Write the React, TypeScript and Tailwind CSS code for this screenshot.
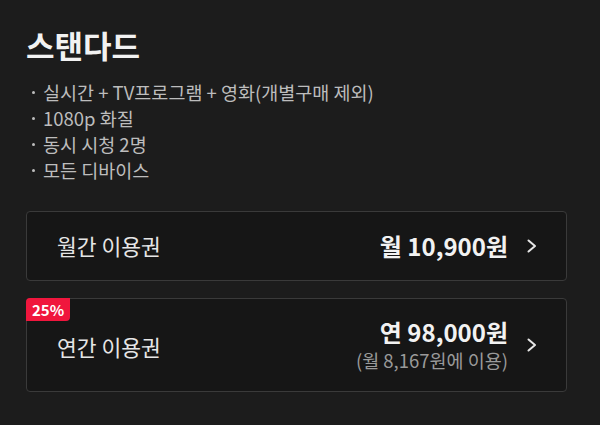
const features = [
  '실시간 + TV프로그램 + 영화(개별구매 제외)',
  '1080p 화질',
  '동시 시청 2명',
  '모든 디바이스',
];

function Chevron() {
  return (
    <svg width="10" height="14" viewBox="0 0 10 14" fill="none" className="text-[#e6e6e6]">
      <path d="M1.5 1.5 8 7l-6.5 5.5" stroke="currentColor" strokeWidth="2" strokeLinecap="round" strokeLinejoin="round" />
    </svg>
  );
}

export default function App() {
  return (
    <div
      className="w-[600px] h-[425px] bg-[#1c1c1c] text-white px-[26px] pt-[25px]"
      style={{ fontFamily: '"Noto Sans CJK KR", "Noto Sans", sans-serif' }}
    >
      <h1 className="text-[31px] font-bold leading-[40px] text-[#f2f2f2]">스탠다드</h1>

      <ul className="mt-[14px] text-[18.5px] leading-[26px] text-[#bdbdbd]">
        {features.map((f) => (
          <li key={f} className="flex items-center pl-[6px]">
            <span className="mr-[8px] h-[3px] w-[3px] rounded-full bg-[#bdbdbd]" />
            {f}
          </li>
        ))}
      </ul>

      <div className="mt-[28px] flex flex-col gap-[17px] w-[541px]">
        <button className="flex h-[70px] items-center justify-between rounded-[4px] border border-[#3a3a3a] bg-[#161616] pl-[30px] pr-[29px] text-left">
          <span className="text-[21.5px] text-[#e6e6e6]">월간 이용권</span>
          <span className="flex items-center gap-[19px]">
            <span className="text-[24px] font-bold text-[#f2f2f2]">월 10,900원</span>
            <Chevron />
          </span>
        </button>

        <button className="relative flex h-[94px] items-center justify-between rounded-[4px] border border-[#3a3a3a] bg-[#161616] pl-[30px] pr-[29px] text-left">
          <span className="absolute -left-px -top-px rounded-tl-[4px] rounded-br-[4px] bg-[#f0163d] px-[6px] text-[15px] font-bold leading-[23px] text-white">
            25%
          </span>
          <span className="mt-[4px] text-[21.5px] text-[#e6e6e6]">연간 이용권</span>
          <span className="flex items-center gap-[19px]">
            <span className="flex flex-col items-end">
              <span className="text-[24px] font-bold leading-[30px] text-[#f2f2f2]">연 98,000원</span>
              <span className="text-[18.5px] leading-[26px] text-[#9a9a9a]">(월 8,167원에 이용)</span>
            </span>
            <Chevron />
          </span>
        </button>
      </div>
    </div>
  );
}
